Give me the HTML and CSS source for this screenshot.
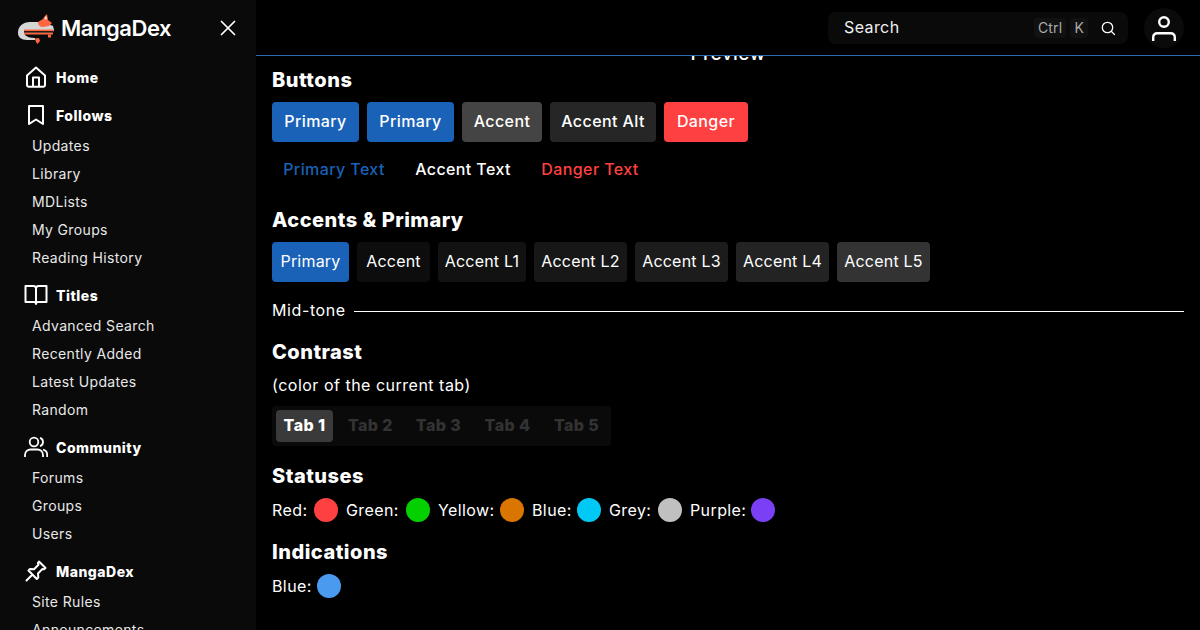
FILE: index.html
```html
<!DOCTYPE html>
<html lang="en">
<head>
<meta charset="utf-8">
<title>MangaDex</title>
<link rel="stylesheet" href="styles.css">
</head>
<body>
<div class="app">
  <aside class="sidebar">
    <div class="brand">
      <div class="logo">
        <svg class="cat" viewBox="0 0 40 32" width="40" height="32">
          <path d="M2 20C2 13 7 9 14 9L26 9L37 13L38 17L36 21H9V22C11 24 14 25 19 25V27H11C5 27 2 24 2 20Z" fill="#d6d6d6"/>
          <path d="M22 9L27 6L28 4L31 1L32 7L36 10L33 13L27 14C24 14 22 12 22 9Z" fill="#ff6740"/>
          <path d="M30 2.500L31 6L28.500 6.500Z" fill="#fff"/>
          <rect x="8" y="16.500" width="29" height="1.500" fill="#ff6740"/>
          <rect x="8" y="18" width="29" height="1.800" fill="#2a1a14"/>
          <rect x="8" y="19.800" width="29" height="1.700" fill="#ff6740"/>
          <rect x="32" y="21.500" width="3" height="3" fill="#ff6740"/>
          <path d="M19 25.500L23 25L24 28L21.500 31L20 29Z" fill="#ff6740"/>
        </svg>
        <span class="logo-text">MangaDex</span>
      </div>
      <svg class="close" viewBox="0 0 16 16" width="16" height="16"><path d="M1.500 1.500l13 13M14.500 1.500l-13 13" stroke="#fff" stroke-width="1.700" fill="none" stroke-linecap="round"/></svg>
    </div>
    <nav class="nav">
      <a class="nav-head nav-head-first">
        <svg class="ico" viewBox="0 0 24 24"><path d="M3 10.500L12 2.500l9 8V20a1.800 1.800 0 0 1-1.800 1.800H4.800A1.800 1.800 0 0 1 3 20z M9 21.800V12.500h6v9.300" fill="none" stroke="#fff" stroke-width="2" stroke-linejoin="round"/></svg>
        <span>Home</span>
      </a>
      <section class="nav-section">
        <a class="nav-head">
          <svg class="ico" viewBox="0 0 24 24"><path d="M5 3h14v18l-7-4.500L5 21z" fill="none" stroke="#fff" stroke-width="2" stroke-linejoin="round"/></svg>
          <span>Follows</span>
        </a>
        <a class="nav-item">Updates</a>
        <a class="nav-item">Library</a>
        <a class="nav-item">MDLists</a>
        <a class="nav-item">My Groups</a>
        <a class="nav-item">Reading History</a>
      </section>
      <section class="nav-section">
        <a class="nav-head">
          <svg class="ico" viewBox="0 0 24 24"><path d="M1.500 3h8c1.500 0 2.500 1 2.500 2.500C12 4 13 3 14.500 3h8v16H14c-1.200 0-2 .7-2 2 0-1.300-.8-2-2-2H1.500z M12 5.500V21" fill="none" stroke="#fff" stroke-width="2" stroke-linejoin="round"/></svg>
          <span>Titles</span>
        </a>
        <a class="nav-item">Advanced Search</a>
        <a class="nav-item">Recently Added</a>
        <a class="nav-item">Latest Updates</a>
        <a class="nav-item">Random</a>
      </section>
      <section class="nav-section">
        <a class="nav-head">
          <svg class="ico" viewBox="0 0 24 24"><circle cx="10" cy="7" r="4.300" fill="none" stroke="#fff" stroke-width="1.800"/><path d="M1 22v-2c0-3.500 2.800-5.500 5.500-5.500h7c2.700 0 5.500 2 5.500 5.500v2M16 2.900a4.300 4.300 0 0 1 0 8.200M19 14.700c2.500.6 4.200 2.500 4.200 5.300v2" fill="none" stroke="#fff" stroke-width="1.800"/></svg>
          <span>Community</span>
        </a>
        <a class="nav-item">Forums</a>
        <a class="nav-item">Groups</a>
        <a class="nav-item">Users</a>
      </section>
      <section class="nav-section">
        <a class="nav-head">
          <svg class="ico" viewBox="0 0 24 24"><path d="M15 2.500l6.500 6.500-1.500 1.200-1.500-.3-4.500 4.600.3 4-1.500 1.500L4.500 11.500 6 10l4 .3 4.500-4.500-.6-1.700zM8.500 15.500L2.500 21.500" fill="none" stroke="#fff" stroke-width="2" stroke-linejoin="round" stroke-linecap="round"/></svg>
          <span>MangaDex</span>
        </a>
        <a class="nav-item">Site Rules</a>
        <a class="nav-item">Announcements</a>
      </section>
    </nav>
  </aside>
  <div class="main">
    <header class="topbar">
      <div class="search">
        <span class="search-label">Search</span>
        <kbd class="key">Ctrl</kbd>
        <kbd class="key">K</kbd>
        <svg class="search-ico" viewBox="0 0 16 16" width="16" height="16"><circle cx="7.500" cy="7.500" r="5.200" fill="none" stroke="#fff" stroke-width="1.300"/><path d="M11.500 11.500l3 3" stroke="#fff" stroke-width="1.300" stroke-linecap="round"/></svg>
      </div>
      <div class="avatar">
        <svg viewBox="0 0 24 28" width="24" height="28"><circle cx="12" cy="8" r="4.800" fill="none" stroke="#fff" stroke-width="2.400"/><path d="M1.200 27v-3.500c0-2.800 2-4.300 4.300-4.300h13c2.300 0 4.300 1.500 4.300 4.300V27" fill="none" stroke="#fff" stroke-width="2.400"/></svg>
      </div>
    </header>
    <main class="content">
      <h1 class="preview">Preview</h1>
      <h2 class="title">Buttons</h2>
      <div class="row row-buttons">
        <button class="btn bg-primary">Primary</button>
        <button class="btn bg-primary">Primary</button>
        <button class="btn bg-accent">Accent</button>
        <button class="btn bg-accent-alt">Accent Alt</button>
        <button class="btn bg-danger">Danger</button>
      </div>
      <div class="row row-text">
        <button class="btn text-primary">Primary Text</button>
        <button class="btn text-accent">Accent Text</button>
        <button class="btn text-danger">Danger Text</button>
      </div>
      <h2 class="title title-accents">Accents &amp; Primary</h2>
      <div class="row row-chips">
        <div class="chip bg-primary">Primary</div>
        <div class="chip a0">Accent</div>
        <div class="chip a1">Accent L1</div>
        <div class="chip a2">Accent L2</div>
        <div class="chip a3">Accent L3</div>
        <div class="chip a4">Accent L4</div>
        <div class="chip a5">Accent L5</div>
      </div>
      <div class="midtone"><span>Mid-tone</span><i class="rule"></i></div>
      <h2 class="title title-contrast">Contrast</h2>
      <p class="note">(color of the current tab)</p>
      <div class="tabs">
        <div class="tab active">Tab 1</div>
        <div class="tab">Tab 2</div>
        <div class="tab">Tab 3</div>
        <div class="tab">Tab 4</div>
        <div class="tab">Tab 5</div>
      </div>
      <h2 class="title title-status">Statuses</h2>
      <div class="dots dots-status">
        <span>Red:</span><i class="dot red"></i>
        <span>Green:</span><i class="dot green"></i>
        <span>Yellow:</span><i class="dot yellow"></i>
        <span>Blue:</span><i class="dot blue"></i>
        <span>Grey:</span><i class="dot grey"></i>
        <span>Purple:</span><i class="dot purple"></i>
      </div>
      <h2 class="title title-ind">Indications</h2>
      <div class="dots dots-ind">
        <span>Blue:</span><i class="dot ind"></i>
      </div>
    </main>
  </div>
</div>
</body>
</html>
```
FILE: styles.css
```css
* { box-sizing: border-box; }
html, body { margin: 0; height: 100%; }
body { background: #000; color: #fff; font-family: Inter, "Noto Sans", sans-serif; font-size: 16px; letter-spacing: .4px; overflow: hidden; }
.app { display: flex; height: 630px; overflow: hidden; }
.sidebar { flex: 0 0 256px; background: #0a0a0a; height: 630px; overflow: hidden; padding: 0 0 0 24px; }
.brand { height: 63px; display: flex; align-items: center; justify-content: space-between; padding: 0 20px 8px 0; margin-left: -8px; }
.logo { display: flex; align-items: center; gap: 5px; }
.cat { display: block; margin-top: 3px; }
.logo-text { font-size: 22px; font-weight: 600; letter-spacing: -.45px; }
.nav-head { display: flex; align-items: center; height: 32px; gap: 8px; font-size: 14px; font-weight: 800; letter-spacing: .5px; }
.nav-head-first { height: 28px; }
.ico { width: 24px; height: 24px; flex: none; }
.nav-section { margin-top: 8px; }
.nav-item { display: flex; align-items: center; height: 28px; padding-left: 8px; font-size: 14px; letter-spacing: .35px; color: #e8e8e8; }
.main { flex: 1; min-width: 0; display: flex; flex-direction: column; position: relative; }
.topbar { flex: 0 0 56px; display: flex; align-items: center; justify-content: flex-end; gap: 16px; padding: 0 16px 0 0; background: #000; border-bottom: 1px solid #3268ad; position: relative; z-index: 2; }
.search { width: 300px; height: 32px; background: #0a0a0a; border-radius: 8px; display: flex; align-items: center; padding: 0 12px 0 16px; gap: 4px; }
.search-label { flex: 1; color: #f0f0f0; padding-bottom: 1px; }
.key { font-family: inherit; font-size: 14px; letter-spacing: .2px; color: #aaa; background: #111; border-radius: 4px; height: 20px; padding: 0 4px; display: flex; align-items: center; }
.search-ico { margin-left: 8px; }
.avatar { width: 40px; height: 40px; border-radius: 50%; background: #0a0a0a; display: flex; align-items: center; justify-content: center; }
.content { flex: 1; padding: 0 16px; overflow: hidden; }
.preview { margin: -22px 0 0; height: 32px; padding-top: 6px; text-align: center; font-size: 19px; font-weight: 500; line-height: 27px; }
.title { margin: 0; font-size: 20px; font-weight: 800; letter-spacing: .5px; line-height: 28px; }
.title-accents { margin-top: 16px; }
.title-contrast { margin-top: 12px; }
.title-status { margin-top: 16px; }
.title-ind { margin-top: 16px; }
.row { display: grid; gap: 8px; margin-top: 8px; justify-content: start; }
.row-buttons { grid-template-columns: 87px 87px 80px 106px 84px; }
.row-text { grid-template-columns: 124px 118px 120px; }
.row-chips { grid-template-columns: 77px 73px 88px 93px 93px 93px 93px; }
.btn { height: 40px; border: 0; padding: 0 0 2px; border-radius: 4px; font: 500 16px Inter, "Noto Sans", sans-serif; letter-spacing: .4px; background: transparent; color: #fff; }
.bg-primary { background: #1a62b8; }
.bg-accent { background: #444; }
.bg-accent-alt { background: #262626; }
.bg-danger { background: #ff4040; }
.btn.bg-primary { background: #1a62b8; }
.btn.bg-accent { background: #444; }
.btn.bg-accent-alt { background: #262626; }
.btn.bg-danger { background: #ff4040; }
.text-primary { color: #1a62b8; }
.text-accent { color: #fff; }
.text-danger { color: #ff4040; }
.chip { height: 40px; padding-bottom: 2px; border-radius: 4px; display: flex; align-items: center; justify-content: center; letter-spacing: .2px; }
.a0 { background: #0d0d0d; }
.a1 { background: #121212; }
.a2 { background: #171717; }
.a3 { background: #1c1c1c; }
.a4 { background: #232323; }
.a5 { background: #333; }
.midtone { display: grid; grid-template-columns: 74px 1fr; align-items: center; gap: 8px; margin-top: 12px; height: 32px; letter-spacing: .6px; }
.rule { height: 1px; background: #fff; margin-top: 2px; }
.note { margin: 7px 0 0; line-height: 24px; letter-spacing: .5px; }
.tabs { display: grid; grid-template-columns: 57px 60px 61px 62px 61px; gap: 7.500px; padding: 4px; margin-top: 9px; background: #0a0a0a; border-radius: 4px; width: max-content; }
.tab { height: 32px; padding-bottom: 2px; display: flex; align-items: center; justify-content: center; font-weight: 800; color: #333; border-radius: 4px; }
.tab.active { background: #3a3a3a; color: #fff; }
.dots { display: grid; align-items: center; gap: 8px; margin-top: 8px; height: 24px; justify-content: start; }
.dots-status { grid-template-columns: 34px 24px 52px 24px 54px 24px 37px 24px 41px 24px 53px 24px; }
.dots-ind { grid-template-columns: 37px 24px; }
.dot { width: 24px; height: 24px; border-radius: 50%; }
.red { background: #ff4040; }
.green { background: #04d000; }
.yellow { background: #da7500; }
.blue { background: #00c9f5; }
.grey { background: #c0c0c0; }
.purple { background: #7b40f6; }
.ind { background: #4a9af0; }
```
